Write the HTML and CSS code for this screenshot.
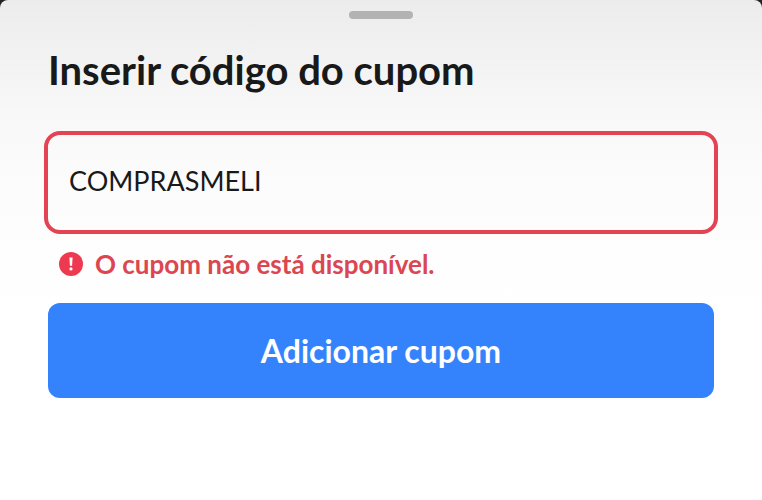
FILE: index.html
```html
<!DOCTYPE html>
<html lang="pt-BR">
<head>
<meta charset="utf-8">
<meta name="viewport" content="width=device-width, initial-scale=1">
<title>Inserir código do cupom</title>
<link rel="stylesheet" href="styles.css">
</head>
<body>
<main class="sheet">
  <div class="handle"></div>
  <h1 class="title"><label for="coupon">Inserir código do cupom</label></h1>
  <form class="form">
    <input class="field" id="coupon" type="text" value="COMPRASMELI" aria-invalid="true" aria-describedby="coupon-error">
    <p class="error" id="coupon-error">
      <svg class="error-icon" viewBox="0 0 24 24" aria-hidden="true">
        <circle cx="12" cy="12" r="12" fill="#ee3a50"/>
        <path d="M10.4 5.5h3.2l-.5 8.3h-2.2z" fill="#fff"/>
        <circle cx="12" cy="16.9" r="1.6" fill="#fff"/>
      </svg>
      <span>O cupom não está disponível.</span>
    </p>
    <button class="submit" type="button">Adicionar cupom</button>
  </form>
</main>
</body>
</html>
```
FILE: styles.css
```css
* {
  box-sizing: border-box;
}

body {
  margin: 0;
  background: #222;
  font-family: Lato, "Liberation Sans", sans-serif;
  color: #191919;
}

.sheet {
  min-height: 100vh;
  padding: 11px 44px 40px;
  border-radius: 8px 8px 0 0;
  background: linear-gradient(#ececec 0, #f8f8f8 115px, #fcfcfc 190px, #fff 310px);
}

.handle {
  width: 64px;
  height: 8px;
  margin: 0 auto;
  border-radius: 4px;
  background: #b3b3b3;
}

.title {
  margin: 27px 4px 37px;
  font-size: 40px;
  line-height: 48px;
  font-weight: 700;
}

.form {
  display: flex;
  flex-direction: column;
}

.field {
  width: 100%;
  height: 103px;
  padding: 0 21px 4px;
  border: 4px solid #e34352;
  border-radius: 16px;
  outline: 0;
  background: transparent;
  font: 400 27px/36px Lato, "Liberation Sans", sans-serif;
  color: #191919;
}

.error {
  display: flex;
  align-items: center;
  gap: 12px;
  margin: 12px 15px 21px;
  font-size: 26px;
  line-height: 36px;
  font-weight: 700;
  color: #db4650;
}

.error-icon {
  width: 24px;
  height: 24px;
}

.submit {
  height: 95px;
  margin: 0 4px;
  border: 0;
  border-radius: 12px;
  background: #3583fc;
  color: #fff;
  font: 700 32px/36px Lato, "Liberation Sans", sans-serif;
}
```
